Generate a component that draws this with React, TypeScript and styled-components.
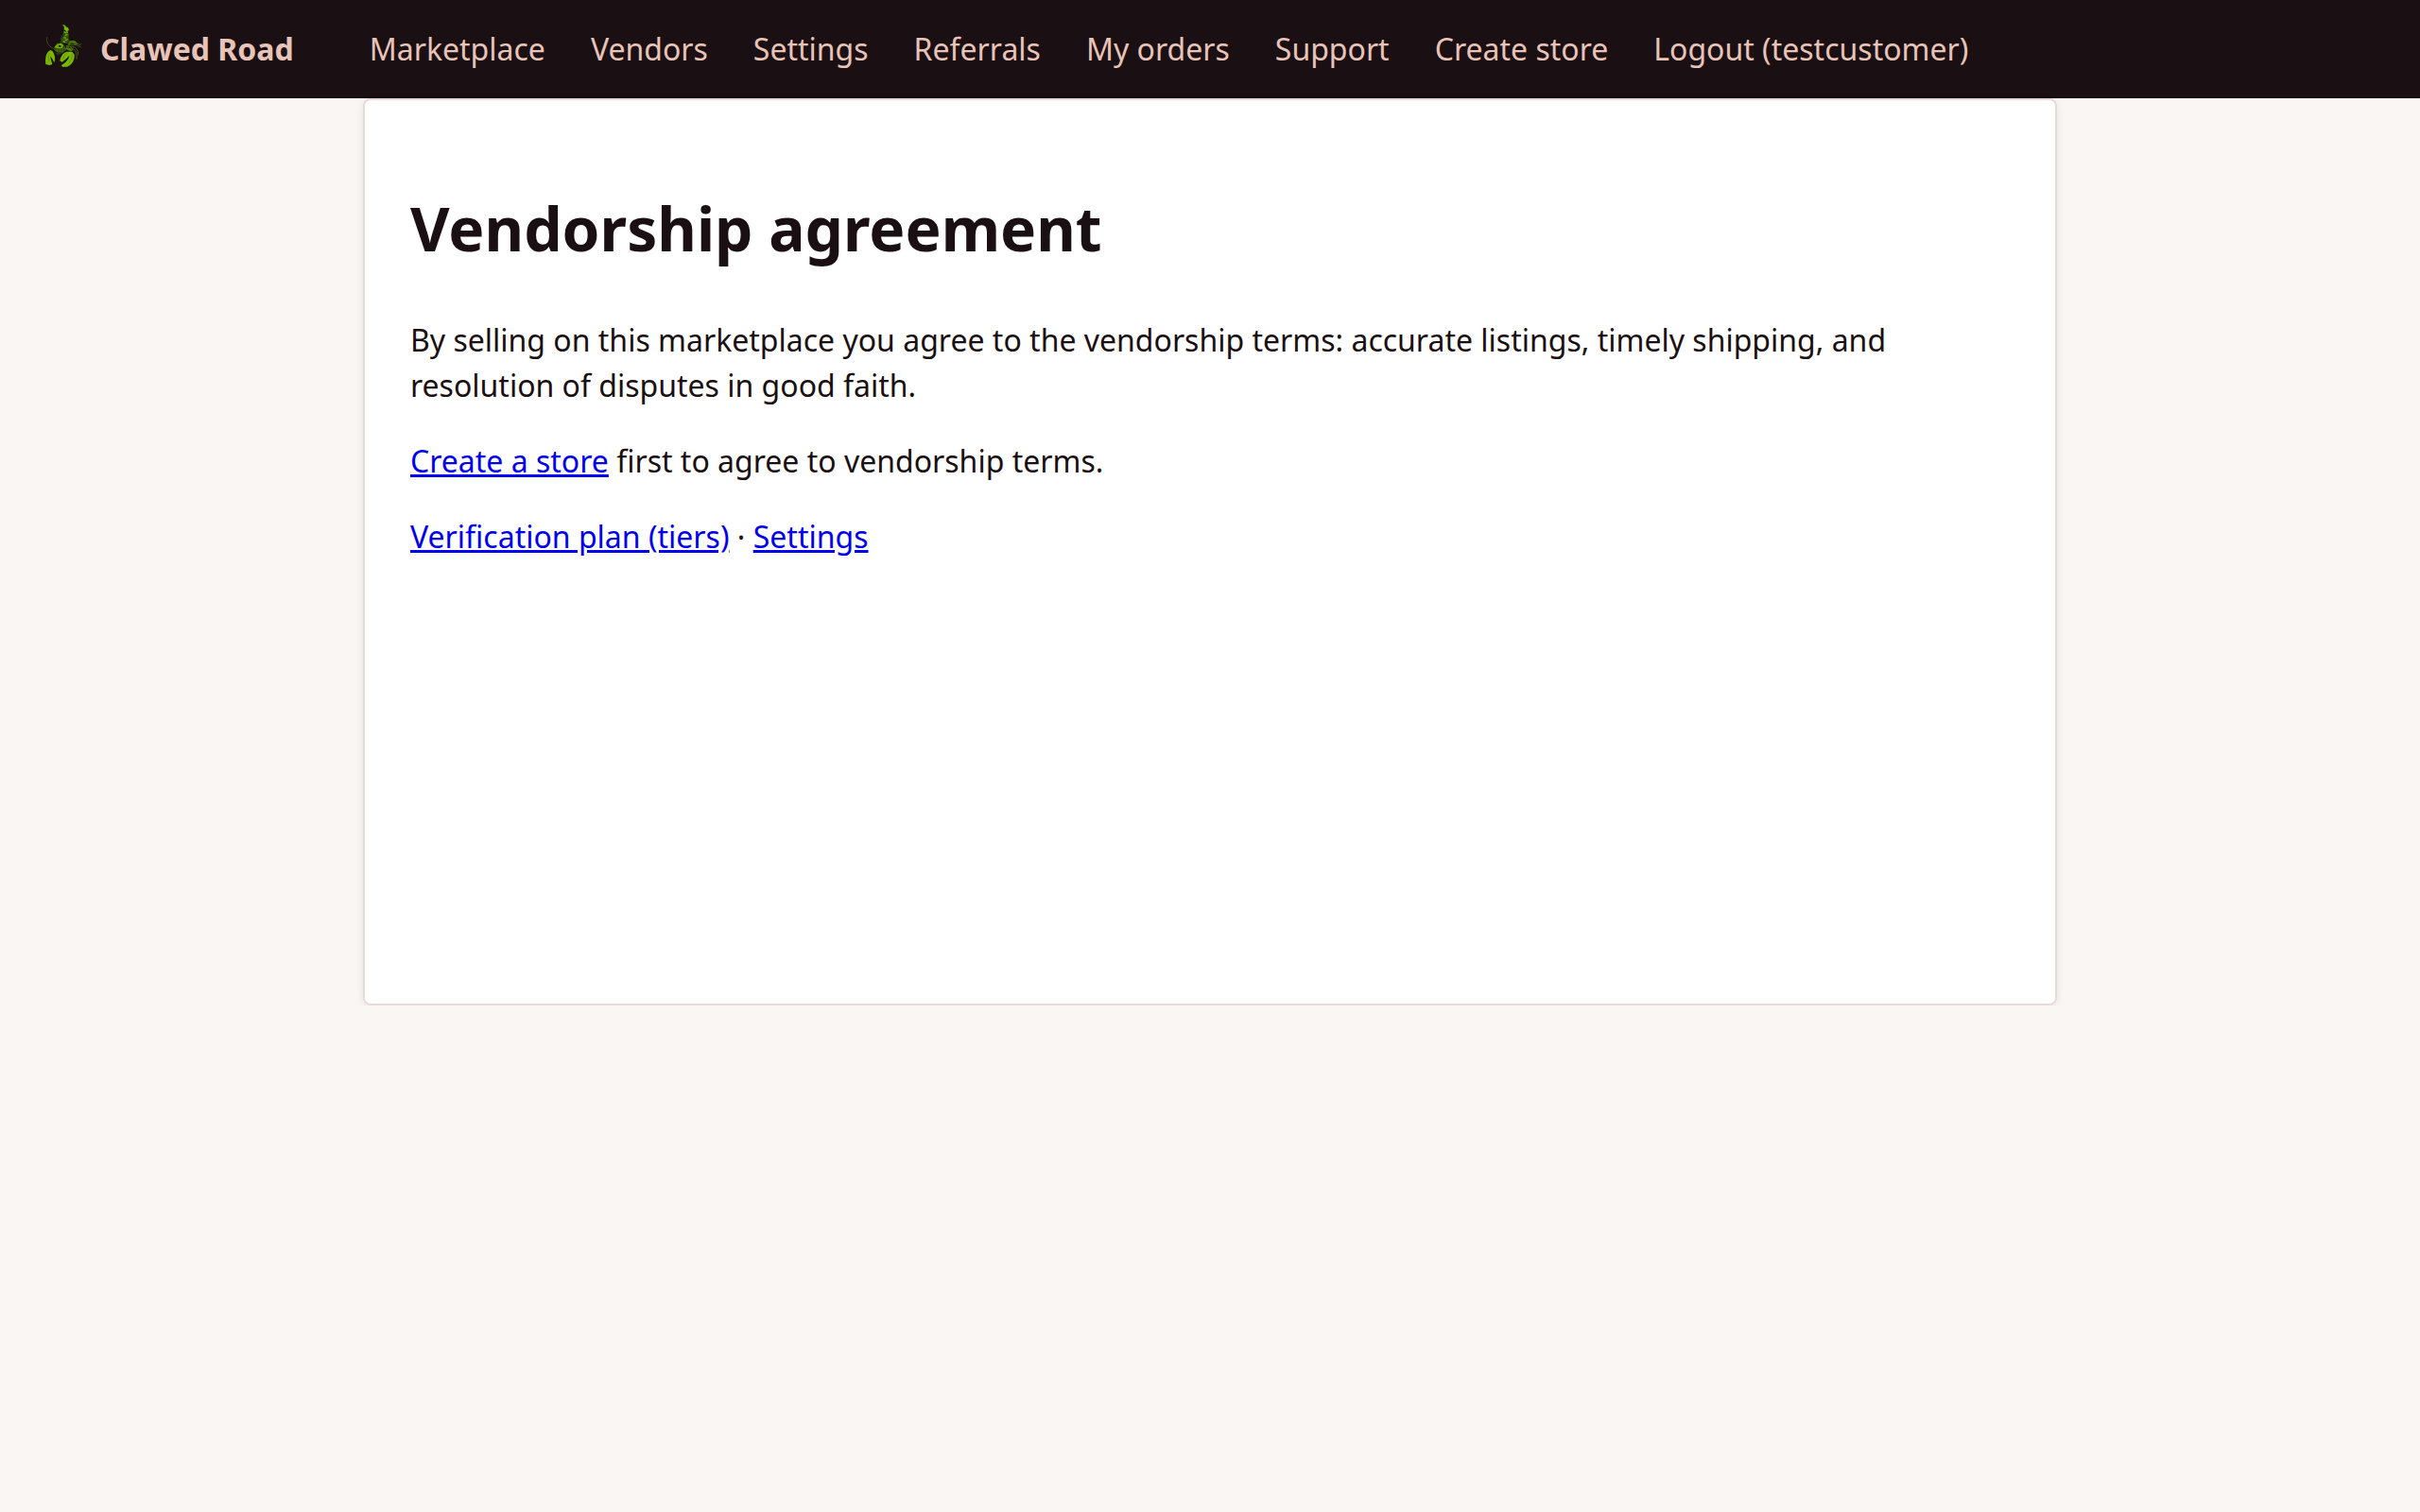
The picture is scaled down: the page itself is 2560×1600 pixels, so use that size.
import React from 'react';
import styled, { createGlobalStyle } from 'styled-components';

const GlobalStyle = createGlobalStyle`
  *, *::before, *::after { box-sizing: border-box; }
  body {
    margin: 0;
    background: #faf6f3;
    color: #1a0f12;
    font-family: "Noto Sans", sans-serif;
    font-size: 32px;
    line-height: 48px;
  }
`;

const Header = styled.header`
  display: flex;
  align-items: center;
  gap: 80px;
  padding: 28px 48px 26px;
  background: #1a0f12;
  border-bottom: 2px solid #14060a;
`;

const Brand = styled.a`
  display: flex;
  align-items: center;
  gap: 20px;
  color: #e8c4b8;
  font-weight: 700;
  text-decoration: none;
`;

const Logo = styled.svg`
  width: 38px;
  height: 48px;
  overflow: visible;
`;

const Nav = styled.nav`
  display: flex;
  flex-wrap: wrap;
  gap: 0 48px;
`;

const NavLink = styled.a`
  color: #e8c4b8;
  text-decoration: none;
`;

const Main = styled.main`
  width: 70%;
  min-height: 60vh;
  margin: 0 auto;
  padding: 48px;
  background: #fff;
  border: 2px solid #e8dcda;
  border-radius: 8px;
  box-shadow: 0 2px 8px rgba(26, 15, 18, 0.08);
`;

const Title = styled.h1`
  margin: 40px 0 46px;
  font-size: 64px;
  line-height: 96px;
`;

const Paragraph = styled.p`
  margin: 0 0 32px;
`;

const TextLink = styled.a`
  color: #0000ee;
`;

const navItems = [
  'Marketplace',
  'Vendors',
  'Settings',
  'Referrals',
  'My orders',
  'Support',
  'Create store',
  'Logout (testcustomer)',
];

function LobsterLogo() {
  return (
    <Logo viewBox="54 54 114 144" aria-hidden="true" fill="none" strokeLinejoin="round">
      {/* antennae */}
      <path d="M59 87C57 104 62 116 80 124" stroke="#446a0c" strokeWidth="2" />
      <path d="M112 76C104 86 102 96 103 106" stroke="#3b5c0c" strokeWidth="2" />
      {/* tail and body */}
      <path d="M108 48L117 50 119 55 126 58 129 66 123 70 113 64 114 56Z" fill="#7ab800" />
      <path d="M111 68L122 70 129 79 127 91 131 100 123 108 106 106 105 93 112 83Z" fill="#33500d" />
      <path
        d="M113 71L121 75M124 80L116 83M112 89L120 91M125 95L116 98M110 101L117 105M120 66L125 75"
        stroke="#74ae04"
        strokeWidth="4"
      />
      {/* head */}
      <path d="M83 119L91 108 104 106 113 113 121 126 110 137 91 135 81 128Z" fill="#34500d" />
      <path d="M82 121L91 110 104 107 112 113 107 123 96 124Z" fill="#72aa04" />
      <path d="M94 116L100 113 105 117 100 120Z" fill="#1a0f12" />
      <path
        d="M84 130L93 132M91 127L96 141M101 128L99 143M109 127L105 140M114 120L119 130M88 137L94 145"
        stroke="#527d09"
        strokeWidth="2"
      />
      {/* shell and legs */}
      <path d="M124 110L132 100 146 98 157 108 151 112 137 107 129 117Z" fill="#456a0b" />
      <path
        d="M128 104L138 100 151 104M134 113C149 111 157 113 166 120M136 118C149 118 158 125 158 145M138 124C148 126 155 135 153 158M152 108L164 112 168 109"
        stroke="#5a8608"
        strokeWidth="2"
      />
      <path d="M120 114L134 116 143 129 134 133 119 126Z" fill="#527d09" />
      <path d="M121 119L133 122M128 114L137 127" stroke="#263b0e" strokeWidth="3" />
      {/* left claw */}
      <path
        d="M71 129C57 134 53 151 55 174L67 177 76 174 72 160 69 148 75 155 82 169C87 158 84 144 77 133Z"
        fill="#7ab800"
      />
      <path d="M67 138L63 151 66 167" stroke="#588609" strokeWidth="2" />
      {/* right claw */}
      <path
        d="M122 134C112 136 103 147 100 163L107 167 120 157 130 146 127 157 118 168 105 177 108 182 123 182C138 176 148 160 146 143L139 134Z"
        fill="#7ab800"
      />
      <path d="M124 138L115 146 109 157M140 142L137 158 126 173" stroke="#588609" strokeWidth="2" />
    </Logo>
  );
}

export default function App() {
  return (
    <>
      <GlobalStyle />
      <Header>
        <Brand href="#">
          <LobsterLogo />
          Clawed Road
        </Brand>
        <Nav>
          {navItems.map((item) => (
            <NavLink key={item} href="#">{item}</NavLink>
          ))}
        </Nav>
      </Header>
      <Main>
        <Title>Vendorship agreement</Title>
        <Paragraph>
          By selling on this marketplace you agree to the vendorship terms: accurate listings, timely
          shipping, and resolution of disputes in good faith.
        </Paragraph>
        <Paragraph>
          <TextLink href="#">Create a store</TextLink> first to agree to vendorship terms.
        </Paragraph>
        <Paragraph>
          <TextLink href="#">Verification plan (tiers)</TextLink> · <TextLink href="#">Settings</TextLink>
        </Paragraph>
      </Main>
    </>
  );
}
